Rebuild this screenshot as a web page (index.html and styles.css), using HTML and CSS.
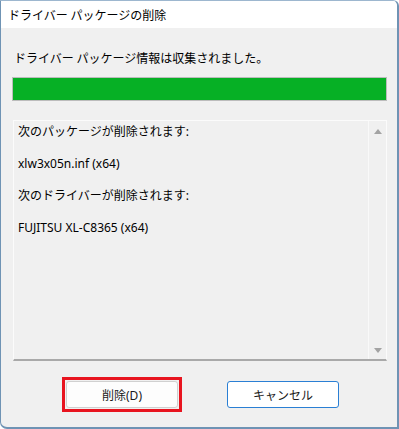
FILE: index.html
```html
<!DOCTYPE html>
<html lang="ja">
<head>
    <meta charset="UTF-8">
    <title>ドライバー パッケージの削除</title>
    <link rel="stylesheet" href="styles.css">
</head>
<body>
    <div class="window">
        <div class="title-bar">ドライバー パッケージの削除</div>
        <div class="content">
            <div class="status">ドライバー パッケージ情報は収集されました。</div>
            <div class="progress"><div class="progress-fill"></div></div>
            <div class="list-box">
                <div class="list-text">
                    <div class="line">次のパッケージが削除されます:</div>
                    <div class="line">xlw3x05n.inf (x64)</div>
                    <div class="line">次のドライバーが削除されます:</div>
                    <div class="line">FUJITSU XL-C8365 (x64)</div>
                </div>
                <div class="scrollbar">
                    <span class="arrow up"></span>
                    <span class="arrow down"></span>
                </div>
            </div>
            <div class="buttons">
                <!-- 赤枠は注釈 -->
                <div class="highlight">
                    <button class="btn">削除(D)</button>
                </div>
                <button class="btn btn-cancel">キャンセル</button>
            </div>
        </div>
    </div>
</body>
</html>
```

FILE: styles.css
```css
body {
    margin: 0;
    background: #ffffff;
    font-family: "Noto Sans", "Noto Sans CJK JP", sans-serif;
    font-size: 12px;
    color: #000;
}

.window {
    width: 399px;
    height: 429px;
    box-sizing: border-box;
    border: 1px solid #6f93b4;
    border-top-color: #9db7cf;
    border-right-width: 2px;
    border-bottom-width: 2px;
    border-radius: 0 6px 0 7px;
    background: #f0f0f0;
    overflow: hidden;
}

.title-bar {
    height: 27px;
    line-height: 27px;
    background: #fff;
    padding-left: 7px;
    font-family: "Noto Sans CJK JP", sans-serif;
}

.content {
    padding: 0 10px 0 11px;
}

.status {
    margin-top: 22px;
    height: 16px;
    line-height: 16px;
    padding-left: 2px;
    font-family: "Noto Sans CJK JP", sans-serif;
}

.progress {
    margin-top: 11px;
    height: 24px;
    box-sizing: border-box;
    border: 1px solid #bcbcbc;
    background: #e6e6e6;
}
.progress-fill {
    height: 100%;
    width: 100%;
    background: #06b025;
}

.list-box {
    margin-top: 19px;
    margin-left: 1px;
    height: 241px;
    box-sizing: border-box;
    border: 1px solid #fbfbfb;
    border-bottom: 2px solid #a9a9a9;
    display: flex;
}
.list-text {
    flex: 1;
    padding: 3px 0 0 4px;
}
.line {
    height: 16px;
    line-height: 16px;
    margin-bottom: 16px;
}
.scrollbar {
    width: 17px;
    border-left: 1px solid #f9f9f9;
    display: flex;
    flex-direction: column;
    justify-content: space-between;
    align-items: center;
    padding: 8px 0 6px;
}
.arrow {
    width: 0;
    height: 0;
    border-left: 4px solid transparent;
    border-right: 4px solid transparent;
}
.arrow.up { border-bottom: 5px solid #a3a3a3; }
.arrow.down { border-top: 5px solid #a3a3a3; }

.buttons {
    display: flex;
    align-items: center;
    gap: 45px;
    margin-top: 16px;
    padding-left: 50px;
}
.highlight {
    border: 3px solid #e8141f;
    padding: 1px;
    display: flex;
}
.btn {
    width: 112px;
    height: 27px;
    box-sizing: border-box;
    background: #fdfdfd;
    border: 1px solid #d0d0d0;
    border-radius: 3px;
    font-family: "Noto Sans", "Noto Sans CJK JP", sans-serif;
    font-size: 12px;
    color: #1a1a1a;
    padding: 0;
}
.btn-cancel {
    border-color: #2a7fd4;
    background: #fff;
}
```
